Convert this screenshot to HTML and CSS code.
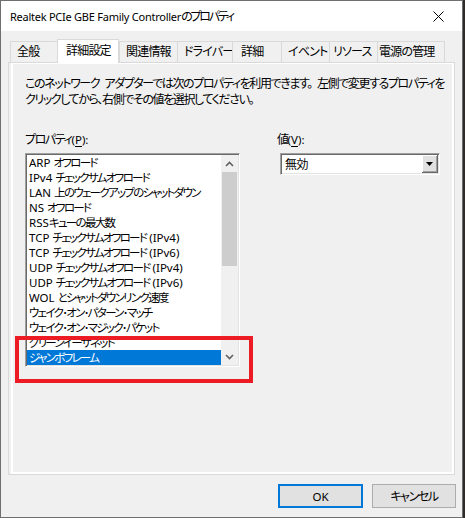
FILE: index.html
```html
<!DOCTYPE html>
<html lang="ja">
<head>
  <meta charset="UTF-8">
  <title>Realtek PCIe GBE Family Controllerのプロパティ</title>
  <link rel="stylesheet" href="styles.css">
</head>
<body>
  <div class="window">
    <div class="titlebar">
      <span class="title"><span class="lat">Realtek PCIe GBE Family Controller</span>のプロパティ</span>
      <svg class="close" width="11" height="11" viewBox="0 0 11 11">
        <path d="M0.5 0.5 L10.5 10.5 M10.5 0.5 L0.5 10.5" stroke="#000" stroke-width="1" fill="none"/>
      </svg>
    </div>

    <div class="tabs">
      <div class="tab w47">全般</div>
      <div class="tab tab-active w62">詳細設定</div>
      <div class="tab w58">関連情報</div>
      <div class="tab w55">ドライバー</div>
      <div class="tab w49 pad8">詳細</div>
      <div class="tab w48">イベント</div>
      <div class="tab w48 pad3">リソース</div>
      <div class="tab w68 pad1 tab-last">電源の管理</div>
    </div>

    <div class="panel">
      <p class="intro">このネットワーク<span class="gap"> </span>アダプターでは次のプロパティを利用できます。<span class="gap"> </span>左側で変更するプロパティを<br>クリックしてから、右側でその値を選択してください。</p>

      <div class="fields">
        <div class="field-prop">
          <label class="field-label">プロパティ<span class="lat">(<u>P</u>):</span></label>
          <div class="listbox">
            <ul class="items">
              <li><span class="lat">ARP </span>オフロード</li>
              <li><span class="lat">IPv4 </span>チェックサムオフロード</li>
              <li><span class="lat">LAN </span>上のウェークアップのシャットダウン</li>
              <li><span class="lat">NS </span>オフロード</li>
              <li><span class="lat">RSS</span>キューの最大数</li>
              <li><span class="lat">TCP </span>チェックサムオフロード<span class="lat"> (IPv4)</span></li>
              <li><span class="lat">TCP </span>チェックサムオフロード<span class="lat"> (IPv6)</span></li>
              <li><span class="lat">UDP </span>チェックサムオフロード<span class="lat"> (IPv4)</span></li>
              <li><span class="lat">UDP </span>チェックサムオフロード<span class="lat"> (IPv6)</span></li>
              <li><span class="lat">WOL </span>とシャットダウンリンク速度</li>
              <li>ウェイク･オン･パターン･マッチ</li>
              <li>ウェイク･オン･マジック･パケット</li>
              <li>グリーンイーサネット</li>
              <li class="selected">ジャンボフレーム</li>
            </ul>
            <div class="scrollbar">
              <div class="arrow">
                <svg width="9" height="6" viewBox="0 0 9 6"><path d="M1 5 L4.5 1.5 L8 5" stroke="#606060" stroke-width="1.6" fill="none"/></svg>
              </div>
              <div class="track"><div class="thumb"></div></div>
              <div class="arrow">
                <svg width="9" height="6" viewBox="0 0 9 6"><path d="M1 1 L4.5 4.5 L8 1" stroke="#606060" stroke-width="1.6" fill="none"/></svg>
              </div>
            </div>
          </div>
        </div>

        <div class="field-value">
          <label class="field-label">値<span class="lat">(<u>V</u>):</span></label>
          <div class="combo">
            <span class="combo-text">無効</span>
            <span class="drop">
              <svg width="7" height="4" viewBox="0 0 7 4"><path d="M0 0 H7 L3.5 4 Z" fill="#000"/></svg>
            </span>
          </div>
        </div>
      </div>
    </div>

    <div class="buttons">
      <button class="btn btn-default"><span class="lat">OK</span></button>
      <button class="btn">キャンセル</button>
    </div>

    <div class="mark"></div>
  </div>
</body>
</html>
```

FILE: styles.css
```css
* {
  box-sizing: border-box;
}
body {
  margin: 0;
  background: #2e2b28;
  font-family: "Noto Sans", "Noto Sans CJK JP", sans-serif;
  font-size: 12px;
  font-feature-settings: "palt";
  letter-spacing: -1.4px;
  color: #000;
}
/* latin runs keep normal spacing, only the kana are packed tighter */
.lat {
  font-size: 11.5px;
  letter-spacing: 0;
}
.gap {
  letter-spacing: 2px;
}
.window {
  position: relative;
  width: 463px;
  height: 518px;
  background: #f0f0f0;
  border: 1px solid #6f6f6f;
}

/* title bar */
.titlebar {
  height: 30px;
  background: #fff;
  display: flex;
  align-items: center;
  justify-content: space-between;
  padding: 0 6px 0 9px;
}
.title {
  letter-spacing: -2.2px;
}
.title .lat {
  font-size: 11px;
  letter-spacing: -0.25px;
}
.close {
  margin-right: 12px;
  display: block;
}

/* tabs */
.tabs {
  height: 31px;
  display: flex;
  align-items: flex-end;
  margin-left: 9px;
}
.tab {
  height: 21px;
  line-height: 20px;
  padding-left: 6px;
  border-top: 1px solid #d9d9d9;
  border-left: 1px solid #d9d9d9;
  background: #f0f0f0;
  white-space: nowrap;
  letter-spacing: -0.8px;
}
.tab-last {
  border-right: 1px solid #d9d9d9;
}
.tab-active {
  position: relative;
  z-index: 1;
  height: 24px;
  line-height: 21px;
  margin-bottom: -1px;
  padding-left: 8px;
  background: #fff;
  border-right: 1px solid #d9d9d9;
}
.w47 { width: 47px; }
.w62 { width: 62px; }
.w58 { width: 58px; }
.w55 { width: 55px; }
.w49 { width: 49px; }
.w48 { width: 48px; }
.w68 { width: 68px; }
.pad8 { padding-left: 8px; }
.pad3 { padding-left: 3px; }
.pad1 { padding-left: 1px; }

/* tab page */
.panel {
  width: 447px;
  height: 413px;
  margin-left: 7px;
  padding: 13px 0 0 16px;
  border: 1px solid #d9d9d9;
  box-shadow: inset 2px 0 0 #f0f0f0, inset 4px 0 0 #fff, inset -2px -2px 0 #fff, inset 0 1px 0 #fff;
}
.intro {
  margin: 0;
  line-height: 16px;
  white-space: nowrap;
}
.fields {
  display: flex;
  gap: 37px;
  margin-top: 24px;
}
.field-label {
  display: block;
  line-height: 16px;
}
.field-label u {
  text-decoration-thickness: 1px;
  text-underline-offset: 2px;
}

/* property list */
.listbox {
  display: flex;
  width: 215px;
  height: 214px;
  margin-top: 5px;
  background: #fff;
  border: 1px solid;
  border-color: #a0a0a0 #fff #fff #a0a0a0;
  box-shadow: inset 1px 1px 0 #696969, inset -1px -1px 0 #e3e3e3;
  padding: 1px;
}
.items {
  flex: 1;
  list-style: none;
  margin: 0;
  padding: 0;
  overflow: hidden;
  font-size: 11.5px;
  letter-spacing: -1.7px;
}
.items .lat {
  font-size: 11.5px;
  letter-spacing: 0;
}
.items li {
  height: 15px;
  line-height: 15px;
  padding-left: 2px;
  white-space: nowrap;
}
.items li.selected {
  background: #0078d7;
  color: #fff;
}
.scrollbar {
  width: 17px;
  display: flex;
  flex-direction: column;
  background: #f0f0f0;
}
.arrow {
  height: 17px;
  display: flex;
  align-items: center;
  justify-content: center;
}
.track {
  flex: 1;
  padding: 0 1px;
}
.thumb {
  height: 94px;
  background: #cdcdcd;
}

/* value combo */
.field-value {
  width: 164px;
}
.combo {
  display: flex;
  align-items: center;
  justify-content: space-between;
  width: 160px;
  height: 22px;
  margin: 5px 0 0 3px;
  background: #fff;
  border: 1px solid;
  border-color: #a0a0a0 #fff #fff #a0a0a0;
  box-shadow: inset 1px 1px 0 #696969, inset -1px -1px 0 #e3e3e3;
  padding: 1px;
}
.combo-text {
  padding-left: 3px;
  letter-spacing: -0.6px;
}
.drop {
  width: 16px;
  height: 18px;
  display: flex;
  align-items: center;
  justify-content: center;
  background: #e1e1e1;
  border-right: 1px solid #696969;
  border-bottom: 1px solid #696969;
  box-shadow: inset 1px 1px 0 #fff, inset -1px -1px 0 #a0a0a0;
}

/* dialog buttons */
.buttons {
  display: flex;
  justify-content: flex-end;
  gap: 9px;
  margin-top: 9px;
  padding-right: 6px;
}
.btn {
  height: 24px;
  width: 84px;
  padding: 0;
  font: inherit;
  letter-spacing: inherit;
  color: #000;
  background: #e1e1e1;
  border: 1px solid #adadad;
}
.btn-default {
  width: 85px;
  border: 2px solid #0078d7;
}

/* red frame drawn over the list */
.mark {
  position: absolute;
  left: 14px;
  top: 335px;
  width: 238px;
  height: 47px;
  border: 4px solid #ed1c24;
}
```
